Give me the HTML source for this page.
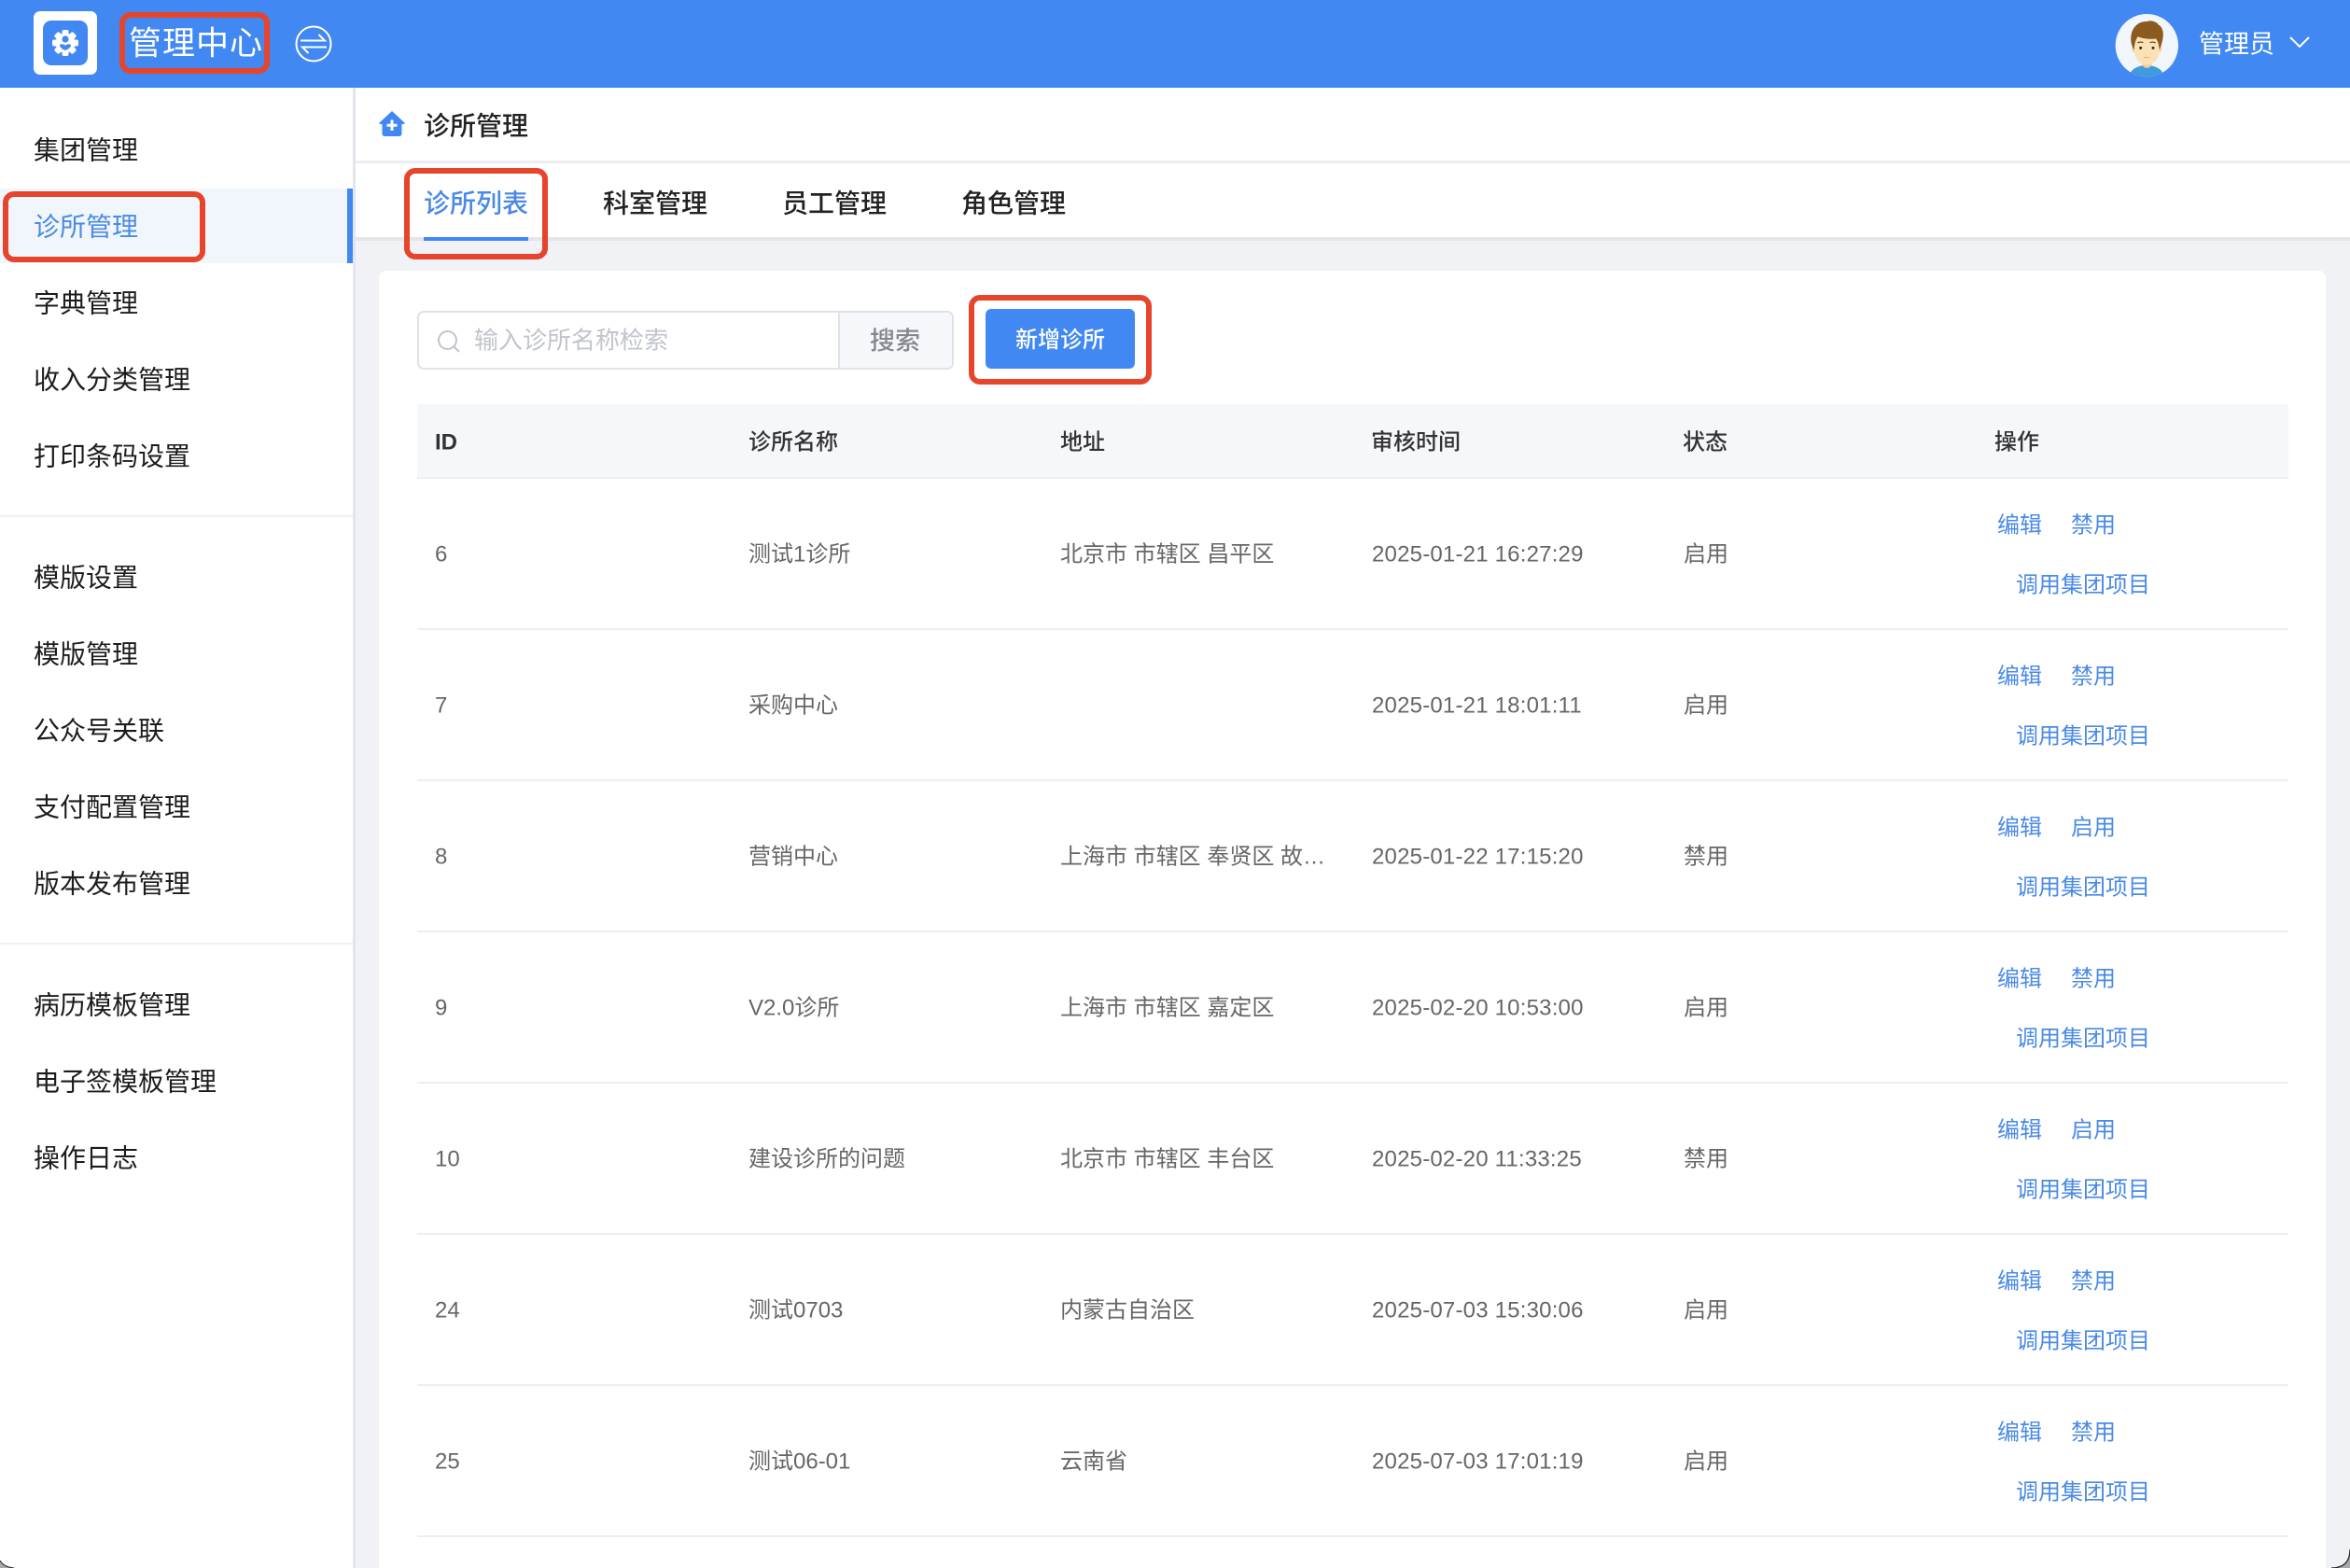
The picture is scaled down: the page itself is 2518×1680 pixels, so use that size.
<!DOCTYPE html>
<html lang="zh-CN">
<head>
<meta charset="utf-8">
<title>诊所管理</title>
<style>
*{box-sizing:border-box;margin:0;padding:0}
html,body{width:2518px;height:1680px;overflow:hidden;background:#fff}
body{position:relative;font-family:"Liberation Sans","Noto Sans CJK SC",sans-serif;color:#222}
.a{position:absolute}
.t{position:absolute;white-space:nowrap;line-height:40px;height:40px;transform:translateY(1.5px)}
.red{position:absolute;border:6px solid #e6442b;border-radius:12px}
#head{left:0;top:0;width:2518px;height:94px;background:#4288f2}
#side{left:0;top:94px;width:381px;height:1586px;background:#fff;border-right:3px solid #e3e5ea}
.nav{font-size:28px;left:36px;color:#1c1c1c}
.div{position:absolute;left:0;width:378px;height:2px;background:#eff0f3}
#main{left:381px;top:94px;width:2137px;height:1586px;background:#f0f2f6}
#crumb{left:381px;top:94px;width:2137px;height:81px;background:#fff;border-bottom:3px solid #ebedf0}
#tabs{left:381px;top:175px;width:2137px;height:83px;background:#fff;border-bottom:4px solid #e4e6ea}
.tab{font-size:28px;top:197px;color:#222}
#card{left:406px;top:290px;width:2086px;height:1400px;background:#fff;border-radius:8px}
#search{left:447px;top:333px;width:575px;height:63px;border:2px solid #dfe2e8;border-radius:7px;background:#fff;overflow:hidden}
#sbtn{position:absolute;right:0;top:0;width:122px;height:59px;background:#f5f7fa;border-left:2px solid #dfe2e8}
#add{left:1056px;top:331px;width:160px;height:64px;background:#4288f2;border-radius:6px;color:#fff;font-size:24px;line-height:67px;text-align:center;font-weight:500}
#th{left:447px;top:433px;width:2005px;height:80px;background:#f5f7fb;border-bottom:2px solid #ebeef3}
.h{font-size:24px;font-weight:500;color:#333;top:20px}
.row{position:absolute;left:447px;width:2005px;height:162px;border-bottom:2px solid #eceef2;font-size:24px;color:#666}
.row .t{top:60px}
.c1{left:19px}.c2{left:355px}.c3{left:689px}.c4{left:1023px;letter-spacing:.2px}.c5{left:1357px}
.row .l{color:#4a8ae6;top:29px}
.row .l1{left:1693px}.row .l2{left:1772px}
.row .l3{left:1713px;top:93px}
</style>
</head>
<body>

<div class="a" id="head"></div>
<div class="a" style="left:36px;top:12px;width:68px;height:68px;background:#fff;border-radius:7px"></div>
<div class="a" style="left:46px;top:22px;width:48px;height:48px;background:#4288f2;border-radius:9px"></div>
<svg class="a" style="left:54px;top:30px" width="32" height="32" viewBox="0 0 32 32">
  <g fill="#fff">
    <circle cx="16" cy="16" r="10.5"/>
    <g id="teeth">
      <rect x="12.5" y="2" width="7" height="6" rx="2"/>
      <rect x="12.5" y="24" width="7" height="6" rx="2"/>
      <rect x="2" y="12.5" width="6" height="7" rx="2"/>
      <rect x="24" y="12.5" width="6" height="7" rx="2"/>
    </g>
    <g transform="rotate(45 16 16)">
      <rect x="12.5" y="2" width="7" height="6" rx="2"/>
      <rect x="12.5" y="24" width="7" height="6" rx="2"/>
      <rect x="2" y="12.5" width="6" height="7" rx="2"/>
      <rect x="24" y="12.5" width="6" height="7" rx="2"/>
    </g>
  </g>
  <circle cx="16" cy="12" r="3.6" fill="#4288f2"/>
  <path d="M9.8 18.2c2 -1.6 4 -1 6.200 .4c2.200 -1.400 4.200 -2 6.200 -.4c-.8 3.200 -3.400 5 -6.200 5.600c-2.800 -.6 -5.400 -2.400 -6.200 -5.600z" fill="#4288f2"/>
</svg>

<div class="t" style="left:138px;top:26px;font-size:35px;letter-spacing:1px;color:#fff;font-weight:400">管理中心</div>
<div class="red" style="left:128px;top:13px;width:161px;height:66px"></div>

<svg class="a" style="left:316px;top:27px" width="40" height="40" viewBox="0 0 40 40" fill="none" stroke="#fff" stroke-width="2">
  <circle cx="20" cy="20" r="18.500"/>
  <path d="M6 16.500H32L25.500 10"/>
  <path d="M34 23.500H8L14.500 30"/>
</svg>

<svg class="a" style="left:2260px;top:10px" width="80" height="80" viewBox="0 0 240 240">
  <defs><clipPath id="av"><circle cx="121" cy="116" r="101"/></clipPath></defs>
  <circle cx="121" cy="116" r="101" fill="#f0f6fb"/>
  <g clip-path="url(#av)">
    <path d="M62 218c6-26 30-38 58-38s52 12 58 38v20H62z" fill="#3f9bdc"/>
    <path d="M106 150h30v26c0 8-8 13-15 13s-15-5-15-13z" fill="#f3c998"/>
    <ellipse cx="80" cy="127" rx="7" ry="12" fill="#f5cf9f"/>
    <ellipse cx="162" cy="127" rx="7" ry="12" fill="#f5cf9f"/>
    <path d="M81 92h80v42c0 26-20 45-40 45s-40-19-40-45z" fill="#fbe2b6"/>
    <path d="M80 130c-10-14-13-34-8-54c7-24 26-38 50-37c10-4 28-1 36 10c14 8 18 26 14 46c-2 12-5 24-11 35c-1-14-3-26-11-36c-24 4-46-2-58-6c-8 10-11 26-12 42z" fill="#8a5a1e"/>
    <circle cx="101" cy="124" r="4.500" fill="#33261c"/>
    <circle cx="141" cy="124" r="4.500" fill="#33261c"/>
    <path d="M91 108q9-5 18-1M131 107q9-4 18 1" stroke="#5f3c14" stroke-width="3.500" fill="none"/>
    <path d="M111 153q10 5 20 0" stroke="#e2a878" stroke-width="2.500" fill="none"/>
  </g>
</svg>
<div class="t" style="left:2356px;top:26px;font-size:27px;color:#fff;font-weight:400">管理员</div>
<svg class="a" style="left:2452px;top:37px" width="24" height="16" viewBox="0 0 24 16" fill="none" stroke="#fff" stroke-width="2"><path d="M2 3L12 13L22 3"/></svg>

<div class="a" id="side"></div>
<div class="a" style="left:0;top:202px;width:378px;height:80px;background:#f0f6fb"></div>
<div class="a" style="left:372px;top:202px;width:6px;height:80px;background:#4288f2"></div>
<div class="t nav" style="top:140px">集团管理</div>
<div class="t nav" style="top:222px;color:#4a8ae6">诊所管理</div>
<div class="t nav" style="top:304px">字典管理</div>
<div class="t nav" style="top:386px">收入分类管理</div>
<div class="t nav" style="top:468px">打印条码设置</div>
<div class="div" style="top:552px"></div>
<div class="t nav" style="top:598px">模版设置</div>
<div class="t nav" style="top:680px">模版管理</div>
<div class="t nav" style="top:762px">公众号关联</div>
<div class="t nav" style="top:844px">支付配置管理</div>
<div class="t nav" style="top:926px">版本发布管理</div>
<div class="div" style="top:1010px"></div>
<div class="t nav" style="top:1056px">病历模板管理</div>
<div class="t nav" style="top:1138px">电子签模板管理</div>
<div class="t nav" style="top:1220px">操作日志</div>
<div class="red" style="left:3px;top:205px;width:217px;height:76px"></div>

<div class="a" id="main"></div>
<div class="a" id="crumb"></div>
<svg class="a" style="left:406px;top:119px" width="28" height="27" viewBox="0 0 28 27">
  <path d="M14 0L27.500 12.500Q28 14 26 14H24.500V24Q24.500 27 21.500 27H6.500Q3.500 27 3.500 24V14H2Q0 14 .5 12.500Z" fill="#4288f2"/>
  <path d="M14 9.500V21M8.500 15.200H19.500" stroke="#fff" stroke-width="3"/>
</svg>
<div class="t" style="left:454px;top:114px;font-size:28px;font-weight:500;color:#222">诊所管理</div>

<div class="a" id="tabs"></div>
<div class="t tab" style="left:454px;color:#4a8ae6;font-weight:500">诊所列表</div>
<div class="t tab" style="left:646px;font-weight:500">科室管理</div>
<div class="t tab" style="left:838px;font-weight:500">员工管理</div>
<div class="t tab" style="left:1030px;font-weight:500">角色管理</div>
<div class="a" style="left:454px;top:254px;width:112px;height:4px;background:#4288f2"></div>
<div class="red" style="left:433px;top:180px;width:154px;height:98px"></div>

<div class="a" id="card"></div>
<div class="a" id="search"><div id="sbtn"></div></div>
<svg class="a" style="left:468px;top:353px" width="26" height="26" viewBox="0 0 26 26" fill="none" stroke="#c0c4cc" stroke-width="2"><circle cx="11.500" cy="11.500" r="9.500"/><path d="M18.500 18.500L24 24"/></svg>
<div class="t" style="left:508px;top:343px;font-size:26px;color:#c0c4cc">输入诊所名称检索</div>
<div class="t" style="left:932px;top:344px;font-size:27px;color:#85878c;font-weight:500">搜索</div>
<div class="a" id="add">新增诊所</div>
<div class="red" style="left:1038px;top:316px;width:196px;height:96px"></div>

<div class="a" id="th">
  <div class="t h" style="left:19px;font-weight:700">ID</div>
  <div class="t h" style="left:355px">诊所名称</div>
  <div class="t h" style="left:689px">地址</div>
  <div class="t h" style="left:1022px">审核时间</div>
  <div class="t h" style="left:1356px">状态</div>
  <div class="t h" style="left:1690px">操作</div>
</div>

<div class="row" style="top:513px">
  <div class="t c1">6</div><div class="t c2">测试1诊所</div><div class="t c3">北京市 市辖区 昌平区</div><div class="t c4">2025-01-21 16:27:29</div><div class="t c5">启用</div>
  <div class="t l l1">编辑</div><div class="t l l2">禁用</div><div class="t l l3">调用集团项目</div>
</div>
<div class="row" style="top:675px">
  <div class="t c1">7</div><div class="t c2">采购中心</div><div class="t c4">2025-01-21 18:01:11</div><div class="t c5">启用</div>
  <div class="t l l1">编辑</div><div class="t l l2">禁用</div><div class="t l l3">调用集团项目</div>
</div>
<div class="row" style="top:837px">
  <div class="t c1">8</div><div class="t c2">营销中心</div><div class="t c3">上海市 市辖区 奉贤区 故…</div><div class="t c4">2025-01-22 17:15:20</div><div class="t c5">禁用</div>
  <div class="t l l1">编辑</div><div class="t l l2">启用</div><div class="t l l3">调用集团项目</div>
</div>
<div class="row" style="top:999px">
  <div class="t c1">9</div><div class="t c2">V2.0诊所</div><div class="t c3">上海市 市辖区 嘉定区</div><div class="t c4">2025-02-20 10:53:00</div><div class="t c5">启用</div>
  <div class="t l l1">编辑</div><div class="t l l2">禁用</div><div class="t l l3">调用集团项目</div>
</div>
<div class="row" style="top:1161px">
  <div class="t c1">10</div><div class="t c2">建设诊所的问题</div><div class="t c3">北京市 市辖区 丰台区</div><div class="t c4">2025-02-20 11:33:25</div><div class="t c5">禁用</div>
  <div class="t l l1">编辑</div><div class="t l l2">启用</div><div class="t l l3">调用集团项目</div>
</div>
<div class="row" style="top:1323px">
  <div class="t c1">24</div><div class="t c2">测试0703</div><div class="t c3">内蒙古自治区</div><div class="t c4">2025-07-03 15:30:06</div><div class="t c5">启用</div>
  <div class="t l l1">编辑</div><div class="t l l2">禁用</div><div class="t l l3">调用集团项目</div>
</div>
<div class="row" style="top:1485px">
  <div class="t c1">25</div><div class="t c2">测试06-01</div><div class="t c3">云南省</div><div class="t c4">2025-07-03 17:01:19</div><div class="t c5">启用</div>
  <div class="t l l1">编辑</div><div class="t l l2">禁用</div><div class="t l l3">调用集团项目</div>
</div>

<svg class="a" style="left:2498px;top:1660px" width="20" height="20" viewBox="0 0 20 20"><path d="M0 20Q20 20 20 0V20Z" fill="#a9a9a9"/><path d="M0 20Q20 20 20 0" fill="none" stroke="#222" stroke-width="1.200"/></svg>
<svg class="a" style="left:0;top:1672px" width="16" height="8" viewBox="0 0 16 8"><path d="M0 0Q4 7 15 8H0Z" fill="#a9a9a9"/><path d="M0 0Q4 7 15 8" fill="none" stroke="#222" stroke-width="1"/></svg>

</body>
</html>
